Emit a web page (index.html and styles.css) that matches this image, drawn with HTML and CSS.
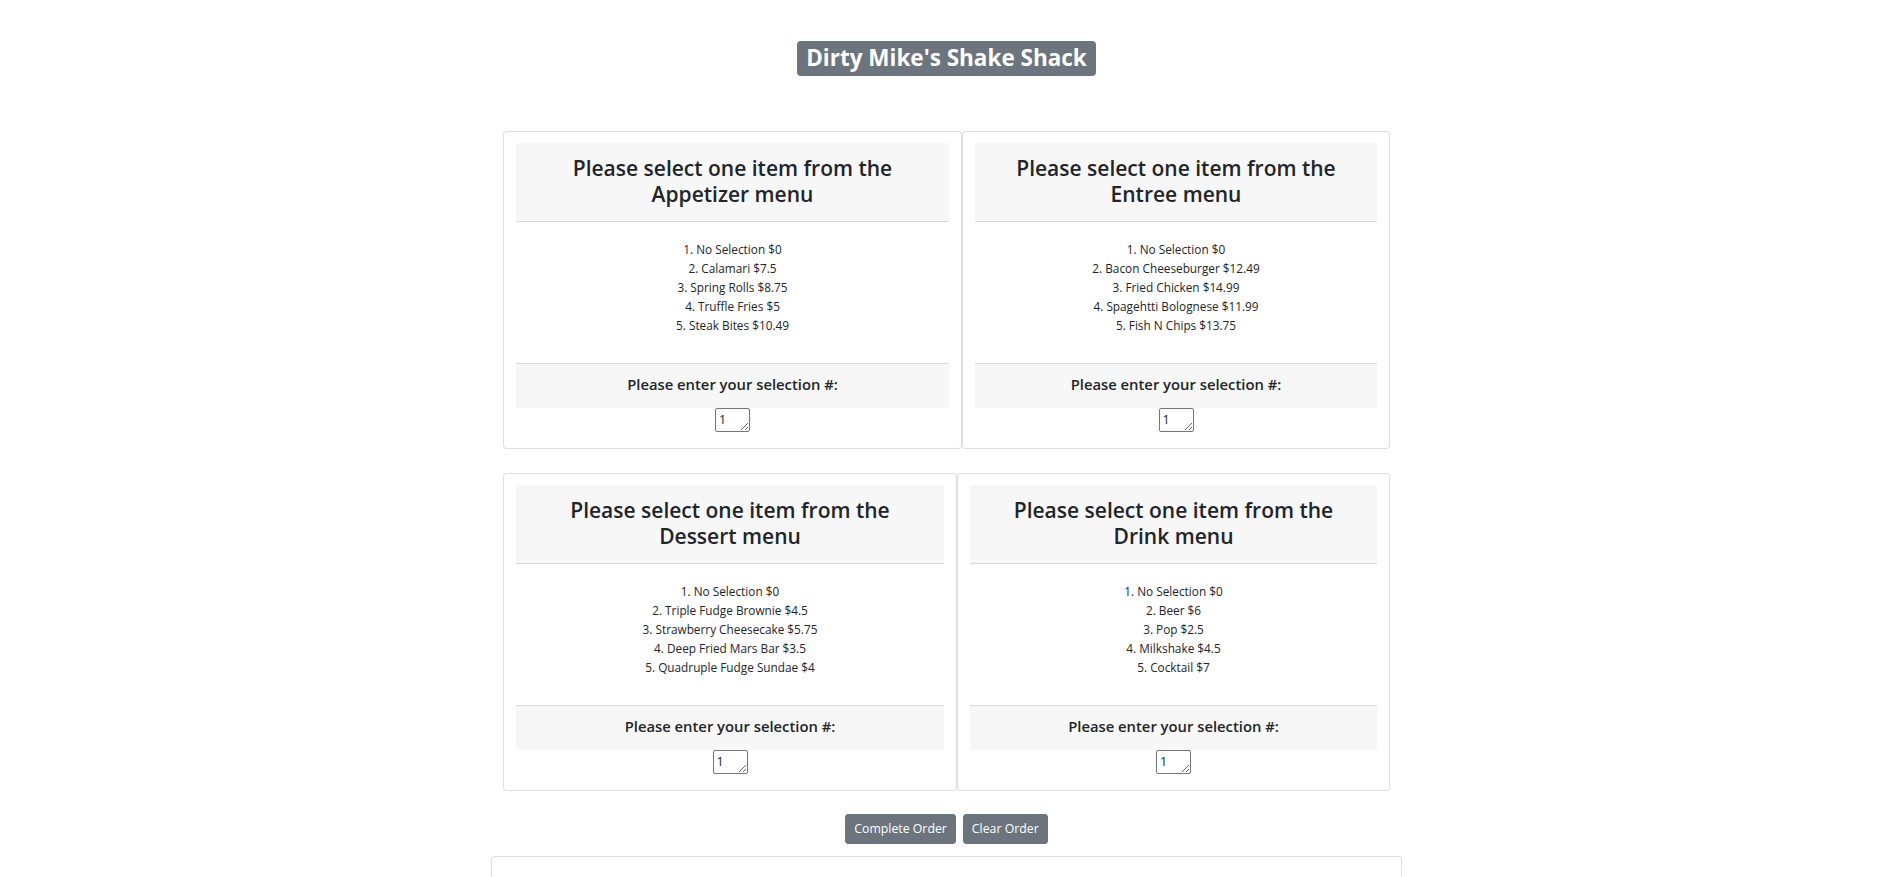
FILE: index.html
```html
<!DOCTYPE html>
<html lang="en">
<head>
<meta charset="utf-8">
<title>Dirty Mike's Shake Shack</title>
<link rel="stylesheet" href="styles.css">
</head>
<body>
<div class="page">
  <header class="title-wrap">
    <h1 class="title-badge">Dirty Mike's Shake Shack</h1>
  </header>

  <main class="menus">
    <div class="menu-row row-top">
      <section class="menu-card">
        <div class="menu-header"><h4>Please select one item from the Appetizer menu</h4></div>
        <ul class="menu-list">
          <li>1. No Selection $0</li>
          <li>2. Calamari $7.5</li>
          <li>3. Spring Rolls $8.75</li>
          <li>4. Truffle Fries $5</li>
          <li>5. Steak Bites $10.49</li>
        </ul>
        <div class="menu-footer"><h6>Please enter your selection #:</h6></div>
        <textarea class="selection" rows="1">1</textarea>
      </section>
      <section class="menu-card">
        <div class="menu-header"><h4>Please select one item from the Entree menu</h4></div>
        <ul class="menu-list">
          <li>1. No Selection $0</li>
          <li>2. Bacon Cheeseburger $12.49</li>
          <li>3. Fried Chicken $14.99</li>
          <li>4. Spagehtti Bolognese $11.99</li>
          <li>5. Fish N Chips $13.75</li>
        </ul>
        <div class="menu-footer"><h6>Please enter your selection #:</h6></div>
        <textarea class="selection" rows="1">1</textarea>
      </section>
    </div>

    <div class="menu-row row-bottom">
      <section class="menu-card">
        <div class="menu-header"><h4>Please select one item from the Dessert menu</h4></div>
        <ul class="menu-list">
          <li>1. No Selection $0</li>
          <li>2. Triple Fudge Brownie $4.5</li>
          <li>3. Strawberry Cheesecake $5.75</li>
          <li>4. Deep Fried Mars Bar $3.5</li>
          <li>5. Quadruple Fudge Sundae $4</li>
        </ul>
        <div class="menu-footer"><h6>Please enter your selection #:</h6></div>
        <textarea class="selection" rows="1">1</textarea>
      </section>
      <section class="menu-card">
        <div class="menu-header"><h4>Please select one item from the Drink menu</h4></div>
        <ul class="menu-list">
          <li>1. No Selection $0</li>
          <li>2. Beer $6</li>
          <li>3. Pop $2.5</li>
          <li>4. Milkshake $4.5</li>
          <li>5. Cocktail $7</li>
        </ul>
        <div class="menu-footer"><h6>Please enter your selection #:</h6></div>
        <textarea class="selection" rows="1">1</textarea>
      </section>
    </div>
  </main>

  <div class="actions">
    <button class="btn" type="button">Complete Order</button>
    <button class="btn" type="button">Clear Order</button>
  </div>

  <section class="receipt"></section>
</div>
</body>
</html>
```

FILE: styles.css
```css
html, body {
  margin: 0;
  padding: 0;
  background: #fff;
}

body {
  font-family: "Open Sans", "Noto Sans", "Liberation Sans", sans-serif;
  color: #212529;
}

.page {
  width: 1893px;
  padding-top: 41px;
}

.title-wrap {
  text-align: center;
}

.title-badge {
  display: inline-block;
  margin: 0;
  padding: 6px 9px 7px;
  font-size: 22.5px;
  line-height: 22px;
  font-weight: 700;
  color: #fff;
  background: #6c757d;
  border-radius: 4px;
}

.menus {
  margin-top: 55px;
}

.menu-row {
  display: grid;
  width: 887px;
  margin: 0 auto;
}

.row-top {
  grid-template-columns: 459px 428px;
}

.row-bottom {
  grid-template-columns: 454px 433px;
  margin-top: 24px;
}

.menu-card {
  border: 1px solid rgba(0, 0, 0, 0.125);
  border-radius: 4px;
  padding: 11px 12px 16px;
  text-align: center;
  background: #fff;
}

.menu-header {
  background: #f7f7f7;
  border-bottom: 1px solid rgba(0, 0, 0, 0.125);
  padding: 12px 20px 13px;
}

.menu-header h4 {
  margin: 0;
  font-size: 21px;
  line-height: 26.4px;
  font-weight: 600;
  color: #212529;
}

.menu-list {
  list-style: none;
  margin: 0;
  padding: 18px 0 28px;
  font-size: 11.8px;
  line-height: 19px;
  color: #212529;
}

.menu-footer {
  background: #f7f7f7;
  border-top: 1px solid rgba(0, 0, 0, 0.125);
  padding: 11px 20px 14px;
}

.menu-footer h6 {
  margin: 0;
  font-size: 14.8px;
  line-height: 19px;
  font-weight: 600;
  color: #212529;
}

.selection {
  display: block;
  box-sizing: border-box;
  width: 35px;
  height: 24px;
  margin: 0 auto;
  padding: 2px 3px;
  font-family: "Open Sans", "Noto Sans", sans-serif;
  font-size: 12.5px;
  line-height: 18px;
  color: #212529;
  border: 1px solid #767676;
  border-radius: 2px;
  background: #fff;
}

.actions {
  display: flex;
  justify-content: center;
  gap: 7px;
  margin-top: 23px;
}

.btn {
  font-family: "Open Sans", "Noto Sans", sans-serif;
  font-size: 12.3px;
  line-height: 20px;
  padding: 4px 8px;
  color: #fff;
  background: #6c757d;
  border: 1px solid #6c757d;
  border-radius: 3px;
  cursor: pointer;
}

.receipt {
  width: 911px;
  height: 120px;
  margin: 12px auto 0;
  box-sizing: border-box;
  border: 1px solid rgba(0, 0, 0, 0.125);
  border-radius: 4px;
  background: #fff;
}
```
